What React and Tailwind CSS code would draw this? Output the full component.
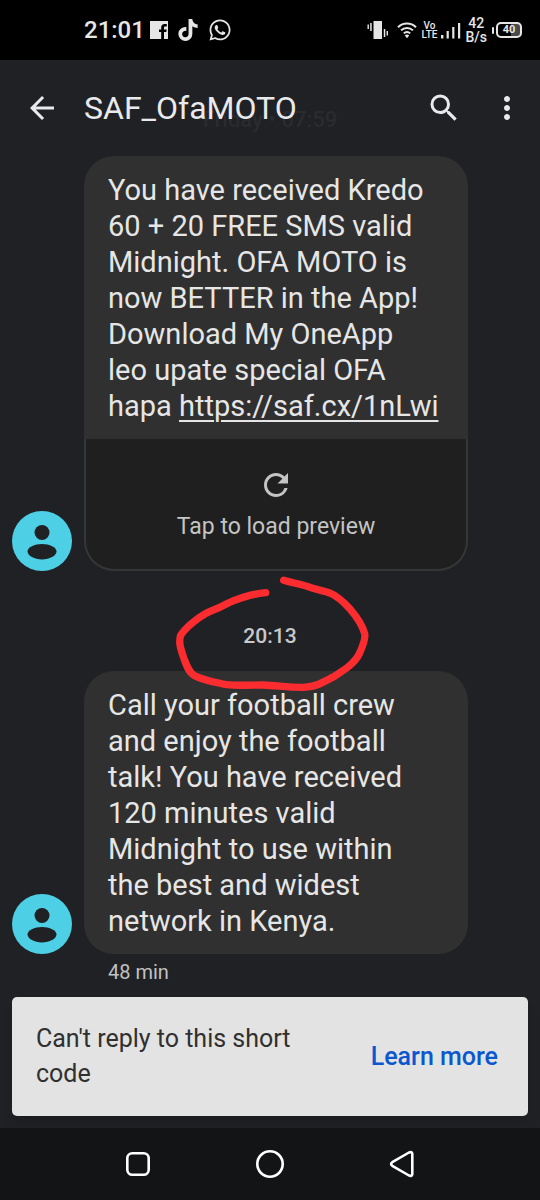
import React from 'react';
import { MdArrowBack, MdMoreVert, MdRefresh, MdSearch } from 'react-icons/md';
import { FaTiktok, FaWhatsapp } from 'react-icons/fa6';

function FacebookIcon() {
  return (
    <svg viewBox="0 0 18 18" className="w-[18px] h-[18px]" fill="currentColor">
      <path d="M0 0h18v18h-4v-7h2.300l.4-2.600h-2.700V6.800c0-.9.4-1.300 1.300-1.300h1.500V3.100h-2.200c-2.300 0-3.400 1.300-3.400 3.400v1.900H9V11h2.200v7H0z" />
    </svg>
  );
}

function VibrateIcon() {
  return (
    <svg viewBox="0 0 22 20" className="w-[22px] h-5" fill="currentColor">
      <path d="M6.5 1h8.5v18H6.5zM0.5 4.5h1.4v4.5H.5zM3.2 3h1.5v8H3.2zM16.8 9h1.5v8h-1.5zM19.6 11h1.4v4.5h-1.4z" />
    </svg>
  );
}

function WifiIcon() {
  return (
    <svg viewBox="0 0 20 18" className="w-5 h-[18px]" fill="none" stroke="currentColor" strokeWidth="2">
      <path d="M1 6.200a12.600 12.600 0 0 1 18 0M4 9.400a8.500 8.500 0 0 1 12 0M6.800 12.400a4.600 4.600 0 0 1 6.400 0" />
      <path d="M7.800 14.600a3.200 3.200 0 0 1 4.400 0L10 17.200z" fill="currentColor" stroke="none" />
    </svg>
  );
}

function SignalIcon() {
  return (
    <svg viewBox="0 0 20 17" className="w-5 h-[17px]" fill="currentColor">
      <path d="M0 13h2.400v3.500H0zM5.600 9h2.200v7.500H5.600zM11.200 5h2.200v11.500h-2.200zM17 1h2.200v15.500H17z" />
    </svg>
  );
}

function Battery({ level }) {
  return (
    <div className="flex items-center gap-[2px]">
      <span className="w-[2px] h-[7px] rounded-sm bg-[#e6e6e6]" />
      <span className="flex items-center justify-center w-[26px] h-4 rounded-[5px] border-2 border-[#e6e6e6] bg-linear-to-r from-black from-60% to-[#4a4a4a] to-60% text-[11px] leading-3 font-bold">
        {level}
      </span>
    </div>
  );
}

function StatusBar() {
  return (
    <div className="flex items-center justify-between h-[60px] pl-[84px] pr-[18px] bg-black text-[#e6e6e6]">
      <div className="flex items-center">
        <span className="text-2xl font-medium">21:01</span>
        <div className="flex items-center gap-[9px] ml-[5px]">
          <FacebookIcon />
          <FaTiktok className="w-[22px] h-[22px]" />
          <FaWhatsapp className="w-6 h-6" />
        </div>
      </div>
      <div className="flex items-center">
        <VibrateIcon />
        <div className="ml-2">
          <WifiIcon />
        </div>
        <div className="flex flex-col items-center ml-[5px] text-[10px] leading-[9px] font-medium">
          <span>Vo</span>
          <span>LTE</span>
        </div>
        <div className="ml-1">
          <SignalIcon />
        </div>
        <div className="flex flex-col items-center ml-1 text-sm leading-[14px] font-medium">
          <span>42</span>
          <span>B/s</span>
        </div>
        <div className="ml-[5px]">
          <Battery level={40} />
        </div>
      </div>
    </div>
  );
}

function Header() {
  return (
    <header className="relative flex items-center h-24 pl-6 pr-[15px] text-[#e8eaed]">
      {/* Date separator scrolled under the toolbar */}
      <span className="absolute top-12 left-1/2 -translate-x-1/2 text-[22px] leading-6 font-medium text-[#2a2b2e] whitespace-nowrap">
        Friday • 07:59
      </span>
      <button type="button" aria-label="Back">
        <MdArrowBack className="w-9 h-9" />
      </button>
      <h1 className="relative flex-1 ml-6 text-[32px] leading-9">SAF_OfaMOTO</h1>
      <button type="button" aria-label="Search">
        <MdSearch className="w-9 h-9" />
      </button>
      <button type="button" aria-label="More options" className="ml-[27px]">
        <MdMoreVert className="w-9 h-9" />
      </button>
    </header>
  );
}

function Avatar() {
  return (
    <svg viewBox="0 0 60 60" className="w-[60px] h-[60px] shrink-0">
      <circle cx="30" cy="30" r="30" fill="#4dd0e6" />
      <circle cx="30" cy="21.5" r="7.5" fill="#202124" />
      <path d="M15.5 40.500c0-4.300 7-7.500 14.500-7.500s14.500 3.200 14.500 7.500-7 8-14.500 8-14.500-3.700-14.500-8z" fill="#202124" />
    </svg>
  );
}

function Message({ children, preview }) {
  return (
    <div className="flex items-end gap-3 pl-3 pr-[72px]">
      <Avatar />
      <div className="flex-1 rounded-[30px] bg-[#303030] overflow-hidden">
        <p className="px-6 pt-4 pb-[15px] text-[29px] leading-9 text-[#e6e6e6]">{children}</p>
        {preview}
      </div>
    </div>
  );
}

function LoadPreview() {
  return (
    <button
      type="button"
      className="flex flex-col items-center w-full h-[132px] pt-7 rounded-b-[30px] border-2 border-t-0 border-[#353637] bg-[#1f1f1f] text-[#c4c4c4]"
    >
      <MdRefresh className="w-9 h-9" />
      <span className="mt-2 text-[23px] leading-8">Tap to load preview</span>
    </button>
  );
}

function TimeDivider({ time }) {
  return (
    <div className="relative flex justify-center h-[100px] pt-[50px]">
      <span className="text-[21px] leading-[30px] font-medium text-[#c8c9ca]">{time}</span>
      <svg
        viewBox="0 0 660 420"
        className="absolute z-10 -top-[6px] left-1/2 -translate-x-1/2 w-[220px] h-[140px] pointer-events-none"
        fill="none"
        stroke="#fb2c2f"
        strokeWidth="22"
        strokeLinecap="round"
        strokeLinejoin="round"
      >
        <path d="M317 83C280 86 236 100 205 114C178 129 156 136 136 146C112 159 75 190 62 211C55 231 62 252 71 278C80 302 86 323 104 332C130 346 168 352 195 358C240 363 275 360 310 360C355 362 389 368 431 367C464 366 485 355 518 337C552 315 584 296 598 266C609 242 617 219 614 206C608 183 589 154 571 133C550 110 531 92 507 83C488 77 466 74 445 65C420 57 390 52 371 46" />
      </svg>
    </div>
  );
}

function ReplyNotice() {
  return (
    <div className="flex items-center justify-between mx-3 mb-3 pl-6 pr-[30px] pt-6 pb-[25px] rounded-[5px] bg-[#e3e3e3] shadow-lg">
      <p className="w-[272px] text-[25px] leading-[35px] text-[#303030]">Can't reply to this short code</p>
      <a href="#learn-more" className="text-[25px] leading-[35px] font-medium text-[#0b57d0]">
        Learn more
      </a>
    </div>
  );
}

function NavBar() {
  return (
    <nav className="flex items-center justify-center gap-[102px] h-[72px] bg-[#131416] text-white">
      <button type="button" aria-label="Recent apps">
        <svg viewBox="0 0 30 30" className="w-[30px] h-[30px]" fill="none" stroke="currentColor" strokeWidth="2.6">
          <rect x="4.300" y="4.300" width="21.400" height="21.400" rx="5" />
        </svg>
      </button>
      <button type="button" aria-label="Home">
        <svg viewBox="0 0 30 30" className="w-[30px] h-[30px]" fill="none" stroke="currentColor" strokeWidth="2.6">
          <circle cx="15" cy="15" r="12.700" />
        </svg>
      </button>
      <button type="button" aria-label="Back">
        <svg viewBox="0 0 30 30" className="w-[30px] h-[30px]" fill="none" stroke="currentColor" strokeWidth="2.6" strokeLinejoin="round">
          <path d="M5.300 13.200L22 3.500q3-1.200 3.300 1.500v20q-.3 2.700-3.300 1.500L5.300 16.800q-2.400-1.800 0-3.600z" />
        </svg>
      </button>
    </nav>
  );
}

export default function App() {
  return (
    <div className="flex flex-col min-h-screen bg-[#202124] font-[Roboto,sans-serif]">
      <StatusBar />
      <Header />
      <main className="flex-1">
        <Message preview={<LoadPreview />}>
          You have received Kredo 60 + 20 FREE SMS valid Midnight. OFA MOTO is now BETTER in the App! Download My
          OneApp
          <br />
          leo upate special OFA
          <br />
          hapa{' '}
          <a href="https://saf.cx/1nLwi" className="underline decoration-2 underline-offset-4">
            https://saf.cx/1nLwi
          </a>
        </Message>
        <TimeDivider time="20:13" />
        <Message>
          Call your football crew and enjoy the football talk! You have received 120 minutes valid Midnight to use
          within
          <br />
          the best and widest
          <br />
          network in Kenya.
        </Message>
        <p className="pl-[108px] pt-1 text-xl leading-7 text-[#c0c1c2]">48 min</p>
      </main>
      <ReplyNotice />
      <NavBar />
    </div>
  );
}
